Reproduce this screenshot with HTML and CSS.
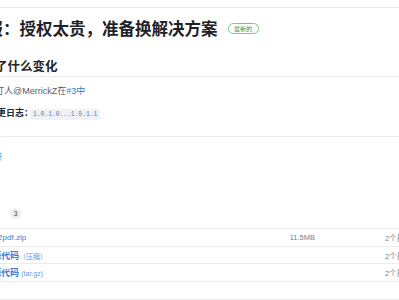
FILE: index.html
```html
<!DOCTYPE html>
<html lang="zh-CN">
<head>
  <meta charset="UTF-8">
  <meta name="viewport" content="width=device-width, initial-scale=1.0">
  <title>发布</title>
  <link rel="stylesheet" href="styles.css">
</head>
<body>
  <div class="topline"></div>

  <div class="release">
    <div class="release-header">
      <h1>简报：授权太贵，准备换解决方案</h1>
      <span class="latest">最新的</span>
    </div>

    <h2 class="section-title">发生了什么变化</h2>
    <ul class="changes">
      <li>修订人<a href="#">@MerrickZ</a>在<a href="#" class="link">#3中</a></li>
    </ul>
    <p class="changelog"><strong>完整变更日志：</strong><code>1.0.1.0...1.0.1.1</code></p>

    <div class="divider"></div>
    <div class="reactions"><span class="chip">展开</span></div>

    <div class="assets-head">
      <span class="assets-title">资源</span>
      <span class="count">3</span>
    </div>

    <div class="assets">
      <div class="asset">
        <a href="#" class="asset-name">md2pdf.zip</a>
        <span class="asset-size">11.5MB</span>
        <span class="asset-date">2个星期前</span>
      </div>
      <div class="asset">
        <a href="#" class="asset-name"><b>源代码</b><span class="muted">（压缩）</span></a>
        <span class="asset-size"></span>
        <span class="asset-date">2个星期前</span>
      </div>
      <div class="asset">
        <a href="#" class="asset-name"><b>源代码</b> <span class="muted">(tar.gz)</span></a>
        <span class="asset-size"></span>
        <span class="asset-date">2个星期前</span>
      </div>
      <div class="asset-foot"></div>
    </div>
  </div>
</body>
</html>
```

FILE: styles.css
```css
body {
  font-family: "Liberation Sans", "Noto Sans CJK SC", sans-serif;
  margin: 0;
  background-color: #ffffff;
  color: #24292f;
  overflow: hidden;
}
a {
  color: #3b7bd4;
  text-decoration: none;
}
.topline {
  height: 7px;
  border-bottom: 1px solid #e9e9e9;
}
.release {
  margin-left: -30px;
  width: 460px;
}
.release-header {
  display: flex;
  align-items: center;
  padding-top: 9px;
  gap: 10px;
}
.release-header h1 {
  margin: 0;
  font-size: 16.5px;
  line-height: 22px;
  font-weight: bold;
  font-family: "Noto Sans CJK SC", sans-serif;
  color: #1f2328;
}
.latest {
  border: 1px solid #7cc68e;
  color: #2f8f46;
  border-radius: 6px;
  font-size: 6px;
  line-height: 9px;
  padding: 0 5.5px;
  font-family: "Noto Sans CJK SC", sans-serif;
}
.section-title {
  margin: 19px 0 0;
  padding-bottom: 2px;
  font-size: 12.5px;
  line-height: 16px;
  font-family: "Noto Sans CJK SC", sans-serif;
  color: #1f2328;
  border-bottom: 1px solid #ececec;
}
.changes {
  list-style: none;
  margin: 7px 0 0;
  padding-left: 16px;
  font-size: 9px;
  line-height: 14px;
  color: #57606a;
}
.changes a {
  color: #57606a;
}
.changes a.link {
  color: #3b7bd4;
}
.changelog {
  margin: 8px 0 0;
  font-size: 9px;
  line-height: 14px;
  color: #24292f;
}
.changelog strong {
  font-family: "Noto Sans CJK SC", sans-serif;
}
code {
  font-family: "Liberation Mono", monospace;
  font-size: 6.3px;
  color: #4a7fd0;
  background-color: #eff1f4;
  border-radius: 3px;
  padding: 2px 3px;
  margin-left: -3px;
}
.divider {
  margin-top: 14px;
  border-top: 1px solid #ececec;
}
.reactions {
  margin-top: 11px;
  height: 10px;
}
.chip {
  display: inline-block;
  width: 32px;
  height: 10px;
  line-height: 10px;
  background-color: #ddf0ff;
  color: #3b7bd4;
  font-size: 7px;
  text-align: right;
  overflow: hidden;
}
.assets-head {
  display: flex;
  align-items: center;
  margin-top: 50px;
  height: 11px;
}
.assets-title {
  width: 40px;
  font-size: 10px;
  color: #ffffff;
}
.count {
  width: 11px;
  height: 11px;
  border-radius: 50%;
  background-color: #eceef1;
  color: #444;
  font-size: 6.5px;
  line-height: 11px;
  text-align: center;
}
.assets {
  margin-top: 9px;
  border-top: 1px solid #ececec;
}
.asset {
  display: grid;
  grid-template-columns: 243px 85px 100px;
  align-items: center;
  height: 16.7px;
  border-bottom: 1px solid #ececec;
  font-size: 8px;
  padding-left: 17px;
}
.asset-name {
  white-space: nowrap;
}
.asset-name b {
  font-size: 9px;
  margin-left: 5px;
  font-family: "Noto Sans CJK SC", sans-serif;
}
.muted {
  font-size: 7px;
  color: #6d98d8;
}
.asset-size {
  text-align: right;
  color: #7a7f86;
  font-size: 7.5px;
}
.asset-date {
  color: #7a7f86;
  font-size: 7.5px;
  padding-left: 70px;
  white-space: nowrap;
}
.asset-foot {
  height: 17px;
  border-bottom: 1px solid #ececec;
}
```
